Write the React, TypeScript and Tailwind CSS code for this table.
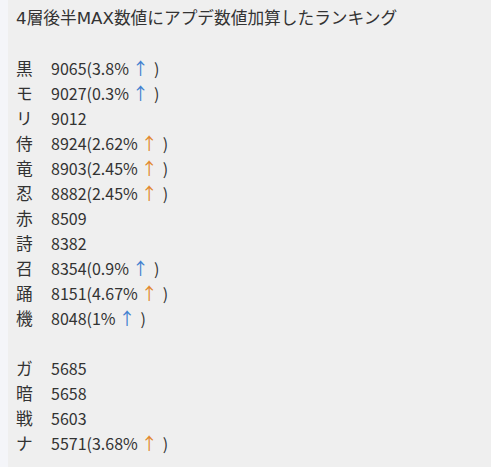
const blue = 'text-[#3f7fd0]'
const orange = 'text-[#e2872b]'

type Row = { label: string; value: string; pct?: string; up?: 'blue' | 'orange' }

const groupA: Row[] = [
  { label: '黒', value: '9065', pct: '3.8%', up: 'blue' },
  { label: 'モ', value: '9027', pct: '0.3%', up: 'blue' },
  { label: 'リ', value: '9012' },
  { label: '侍', value: '8924', pct: '2.62%', up: 'orange' },
  { label: '竜', value: '8903', pct: '2.45%', up: 'orange' },
  { label: '忍', value: '8882', pct: '2.45%', up: 'orange' },
  { label: '赤', value: '8509' },
  { label: '詩', value: '8382' },
  { label: '召', value: '8354', pct: '0.9%', up: 'blue' },
  { label: '踊', value: '8151', pct: '4.67%', up: 'orange' },
  { label: '機', value: '8048', pct: '1%', up: 'blue' },
]

const groupB: Row[] = [
  { label: 'ガ', value: '5685' },
  { label: '暗', value: '5658' },
  { label: '戦', value: '5603' },
  { label: 'ナ', value: '5571', pct: '3.68%', up: 'orange' },
]

const latin = { fontFamily: '"DejaVu Sans", sans-serif' }

function Line({ row }: { row: Row }) {
  return (
    <div className="flex h-[25px] items-baseline">
      <span className="w-[35px] text-[16.7px]">{row.label}</span>
      <span>
        {row.value}
        {row.pct && (
          <>
            ({row.pct}
            <span
              className={`inline-block w-[25px] pl-[3px] text-[17px] leading-[16px] ${row.up === 'blue' ? blue : orange}`}
            >
              ↑
            </span>
            )
          </>
        )}
      </span>
    </div>
  )
}

export default function App() {
  return (
    <div className="flex min-h-[467px] bg-[#efefef]">
      <div className="w-[8px] bg-[#f4f5f9]" />
      <div
        className="px-[8px] pt-[5px] text-[16px] leading-[25px] text-[#333]"
        style={{ fontFamily: '"Noto Sans CJK JP", "Noto Sans", sans-serif' }}
      >
        <div className="text-[16.7px]">
          <span style={latin}>4</span>層後半<span style={latin}>MAX</span>
          数値にアプデ数値加算したランキング
        </div>
        <div className="h-[25px]" />
        {groupA.map((r) => (
          <Line key={r.label} row={r} />
        ))}
        <div className="h-[25px]" />
        {groupB.map((r) => (
          <Line key={r.label} row={r} />
        ))}
      </div>
    </div>
  )
}
